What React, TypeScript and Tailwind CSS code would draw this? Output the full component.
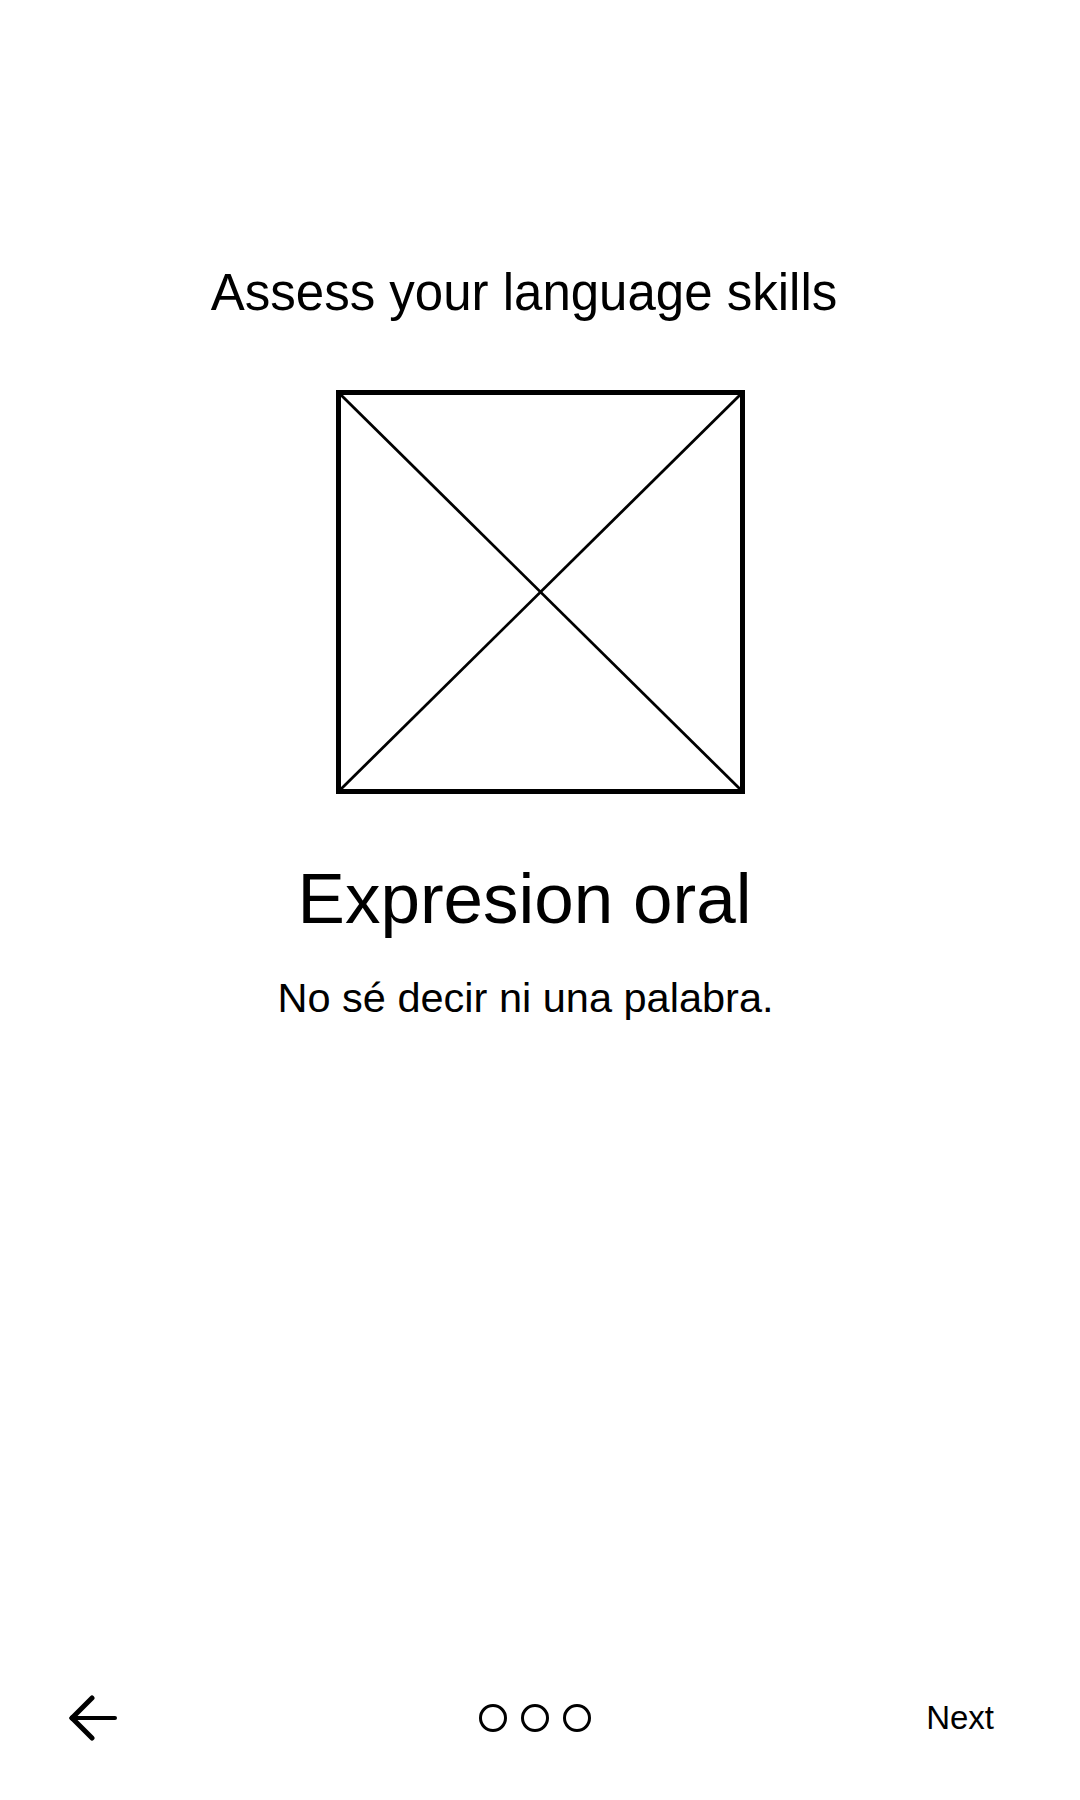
import React from "react";

export default function App() {
  return (
    <div
      className="flex h-[1800px] w-[1080px] flex-col bg-white text-black"
      style={{ fontFamily: '"Liberation Sans", Arial, sans-serif' }}
    >
      <div className="flex flex-col items-center pt-[263px]">
        <h1 className="mr-[32px] h-[60px] text-[51px] font-normal leading-[60px]">
          Assess your language skills
        </h1>
        <div className="mt-[67px] ml-[1px] h-[404px] w-[409px]">
          <svg width="409" height="404" viewBox="0 0 409 404">
            <rect x="2.5" y="2.5" width="404" height="399" fill="none" stroke="#000" strokeWidth="5" />
            <line x1="3" y1="3" x2="406" y2="401" stroke="#000" strokeWidth="2.8" />
            <line x1="406" y1="3" x2="3" y2="401" stroke="#000" strokeWidth="2.8" />
          </svg>
        </div>
        <h2 className="mt-[65px] mr-[31px] h-[80px] text-[71px] font-normal leading-[80px]">
          Expresion oral
        </h2>
        <p className="mt-[35px] mr-[29px] h-[48px] text-[41.5px] leading-[48px]">
          No sé decir ni una palabra.
        </p>
      </div>

      <div className="mt-auto mb-[52px] grid h-[60px] grid-cols-3 items-center pl-[69px] pr-[86px]">
        <div className="flex items-center">
          <svg width="48" height="46" viewBox="0 0 48 46">
            <line x1="3" y1="23" x2="46" y2="23" stroke="#000" strokeWidth="4" strokeLinecap="round" />
            <line x1="3" y1="23" x2="23" y2="3" stroke="#000" strokeWidth="5" strokeLinecap="round" />
            <line x1="3" y1="23" x2="23" y2="43" stroke="#000" strokeWidth="5" strokeLinecap="round" />
          </svg>
        </div>
        <div className="ml-[8px] flex items-center justify-center gap-[14px]">
          <span className="h-[28px] w-[28px] rounded-full border-[3px] border-black" />
          <span className="h-[28px] w-[28px] rounded-full border-[3px] border-black" />
          <span className="h-[28px] w-[28px] rounded-full border-[3px] border-black" />
        </div>
        <div className="flex justify-end">
          <span className="text-[33px] leading-[40px]">Next</span>
        </div>
      </div>
    </div>
  );
}
